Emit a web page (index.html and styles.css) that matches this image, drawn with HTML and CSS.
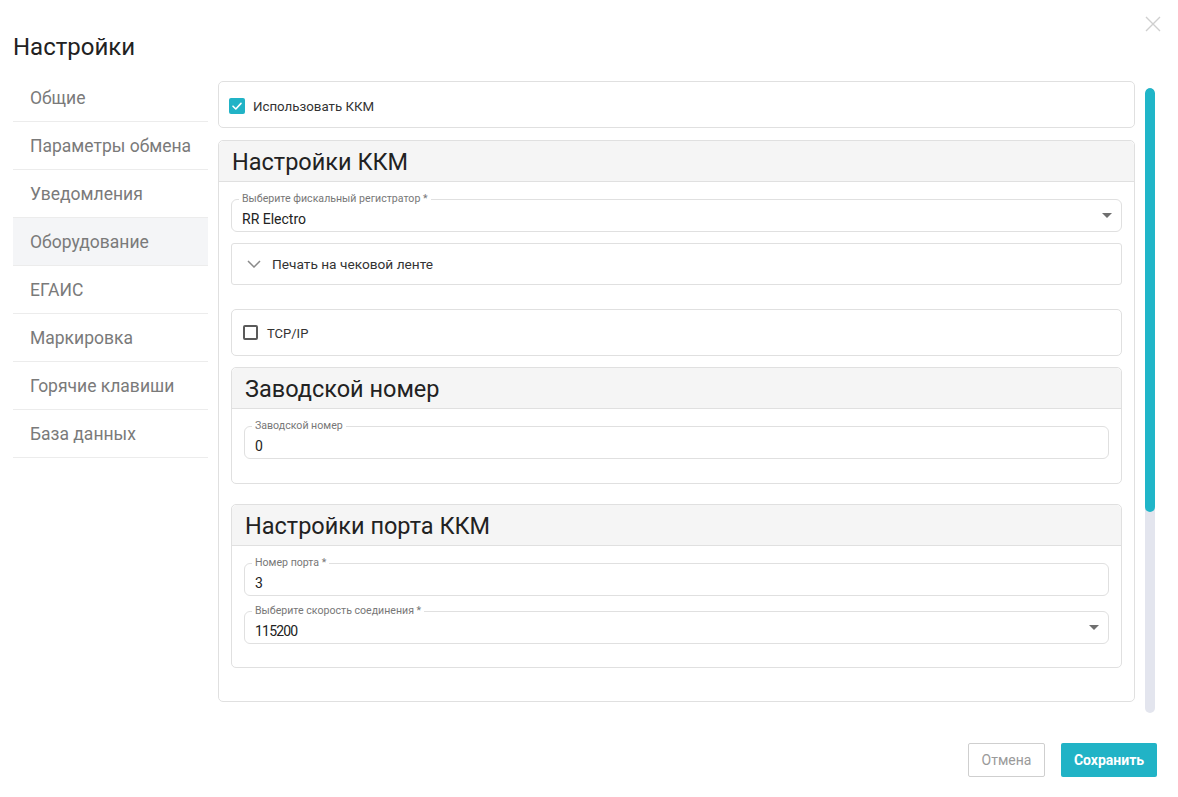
FILE: index.html
```html
<!DOCTYPE html>
<html lang="ru">
<head>
<meta charset="utf-8">
<title>Настройки</title>
<link rel="stylesheet" href="styles.css">
</head>
<body>
<div class="dialog">
  <button class="close" aria-label="Закрыть">
    <svg width="16" height="16" viewBox="0 0 16 16"><path d="M1 1L15 15M15 1L1 15" stroke="#cfcfcf" stroke-width="1.4" fill="none"/></svg>
  </button>
  <h1 class="title">Настройки</h1>
  <div class="body">
    <nav class="sidebar">
      <div class="nav-item">Общие</div>
      <div class="nav-item">Параметры обмена</div>
      <div class="nav-item">Уведомления</div>
      <div class="nav-item active">Оборудование</div>
      <div class="nav-item">ЕГАИС</div>
      <div class="nav-item">Маркировка</div>
      <div class="nav-item">Горячие клавиши</div>
      <div class="nav-item">База данных</div>
    </nav>
    <div class="main">
      <div class="scroll">
        <div class="card check-card">
          <span class="cb checked">
            <svg width="16" height="16" viewBox="0 0 16 16"><path d="M4 8.2L6.8 11L12 5.4" stroke="#fff" stroke-width="1.6" fill="none" stroke-linecap="round" stroke-linejoin="round"/></svg>
          </span>
          <span class="check-label">Использовать ККМ</span>
        </div>

        <div class="card section outer">
          <div class="section-head">Настройки ККМ</div>
          <div class="section-body">
            <div class="field select">
              <span class="legend">Выберите фискальный регистратор *</span>
              <span class="value">RR Electro</span>
              <span class="caret"></span>
            </div>
            <div class="expander">
              <svg class="chev" width="14" height="8" viewBox="0 0 14 8"><path d="M1 1L7 7L13 1" stroke="#8a8a8a" stroke-width="1.5" fill="none"/></svg>
              <span>Печать на чековой ленте</span>
            </div>
            <div class="card check-card inner-check">
              <span class="cb"></span>
              <span class="check-label">TCP/IP</span>
            </div>
            <div class="card section inner serial">
              <div class="section-head">Заводской номер</div>
              <div class="section-body">
                <div class="field">
                  <span class="legend">Заводской номер</span>
                  <span class="value num">0</span>
                </div>
              </div>
            </div>
            <div class="card section inner port">
              <div class="section-head">Настройки порта ККМ</div>
              <div class="section-body">
                <div class="field">
                  <span class="legend">Номер порта *</span>
                  <span class="value num">3</span>
                </div>
                <div class="field select">
                  <span class="legend">Выберите скорость соединения *</span>
                  <span class="value num">115200</span>
                  <span class="caret"></span>
                </div>
              </div>
            </div>
          </div>
        </div>
        <div class="after">Использовать обмен с сервером</div>
      </div>
      <div class="scrollbar"><div class="thumb"></div></div>
    </div>
  </div>
  <div class="footer">
    <button class="btn cancel">Отмена</button>
    <button class="btn save">Сохранить</button>
  </div>
</div>
</body>
</html>
```

FILE: styles.css
```css
* { box-sizing: border-box; }
html, body { margin: 0; padding: 0; background: #fff; }
body {
  font-family: Roboto, "Noto Sans", "Liberation Sans", sans-serif;
  color: #333;
}
.dialog {
  position: relative;
  width: 1178px;
  height: 797px;
  padding: 0 21px 0 13px;
}
.close {
  position: absolute;
  top: 16px;
  right: 17px;
  width: 16px;
  height: 16px;
  padding: 0;
  border: 0;
  background: none;
}
.close svg { display: block; }
.title {
  margin: 0;
  padding-top: 33px;
  font-size: 24px;
  line-height: 28px;
  font-weight: 400;
  color: #222;
}
.body {
  display: flex;
  margin-top: 13px;
  gap: 10px;
  height: 650px;
}
.sidebar {
  width: 195px;
  flex: none;
}
.nav-item {
  height: 48px;
  line-height: 48px;
  padding-left: 17px;
  font-size: 17.5px;
  color: #7a7a7a;
  border-bottom: 1px solid #ececec;
}
.nav-item.active { background: #f4f5f7; }
.main {
  flex: 1;
  display: flex;
  gap: 10px;
  min-width: 0;
}
.scroll {
  width: 917px;
  flex: none;
  padding-top: 7px;
  overflow: hidden;
  height: 650px;
}
.card {
  border: 1px solid #e0e0e0;
  border-radius: 5px;
  background: #fff;
}
.check-card {
  display: flex;
  align-items: center;
  height: 47px;
  padding-left: 10px;
}
.cb {
  width: 16px;
  height: 16px;
  border-radius: 2px;
  border: 2px solid #5a5a5a;
  flex: none;
  display: flex;
  align-items: center;
  justify-content: center;
}
.cb.checked {
  background: #21b3c6;
  border: 0;
  margin-top: 2px;
}
.cb svg { display: block; }
.check-label {
  margin-left: 8px;
  font-size: 13.3px;
  color: #333;
  padding-top: 4px;
}
.outer {
  margin-top: 12px;
  height: 562px;
}
.section-head {
  height: 41px;
  background: #f5f5f5;
  border-bottom: 1px solid #e0e0e0;
  border-radius: 5px 5px 0 0;
  font-size: 23.5px;
  line-height: 43px;
  padding-left: 13px;
  color: #222;
}
.outer > .section-body { padding: 17px 12px 0; }
.field {
  position: relative;
  height: 33px;
  border: 1px solid #e0e0e0;
  border-radius: 6px;
  padding: 9px 10px 0;
  font-size: 14px;
  color: #222;
}
.legend {
  position: absolute;
  top: -7px;
  left: 7px;
  padding: 0 3px;
  background: #fff;
  font-size: 10.6px;
  line-height: 12px;
  color: #777;
}
.value { display: block; line-height: 20px; }
.value.num { letter-spacing: -0.8px; }
.caret {
  position: absolute;
  right: 9px;
  top: 13px;
  width: 0;
  height: 0;
  border-left: 5.5px solid transparent;
  border-right: 5.5px solid transparent;
  border-top: 5.5px solid #6f6f6f;
}
.expander {
  display: flex;
  align-items: center;
  height: 42px;
  margin-top: 11px;
  border: 1px solid #e0e0e0;
  border-radius: 3px;
  padding-left: 15px;
  font-size: 13.7px;
  color: #333;
}
.chev { margin-right: 11px; }
.inner-check {
  margin-top: 24px;
  height: 47px;
  padding-left: 11px;
}
.inner-check .check-label { margin-left: 9px; font-size: 13px; padding-top: 2px; }
.inner-check .cb { width: 15px; height: 15px; }
.inner { margin-top: 11px; }
.inner .section-body { padding: 17px 12px 0; }
.inner .section-head { padding-left: 13px; }
.serial { height: 117px; }
.port { margin-top: 20px; height: 164px; }
.port .field + .field { margin-top: 15px; }
.after {
  margin-top: 20px;
  padding-left: 8px;
  font-size: 13px;
  color: #888;
}
.scrollbar {
  margin-top: 14px;
  width: 10px;
  height: 625px;
  background: #e3e5ee;
  border-radius: 5px;
  flex: none;
  overflow: hidden;
}
.thumb {
  height: 424px;
  background: #20b5c8;
  border-radius: 5px;
}
.footer {
  display: flex;
  justify-content: flex-end;
  gap: 16px;
  margin-top: 19px;
}
.btn {
  height: 34px;
  font-family: Roboto, "Liberation Sans", sans-serif;
  font-size: 14px;
  border-radius: 2px;
  padding: 0;
}
.cancel {
  width: 77px;
  background: #fff;
  border: 1px solid #cfcfcf;
  color: #9a9a9a;
}
.save {
  width: 96px;
  background: #21b3c6;
  border: 0;
  color: #fff;
  font-weight: 700;
}
```
